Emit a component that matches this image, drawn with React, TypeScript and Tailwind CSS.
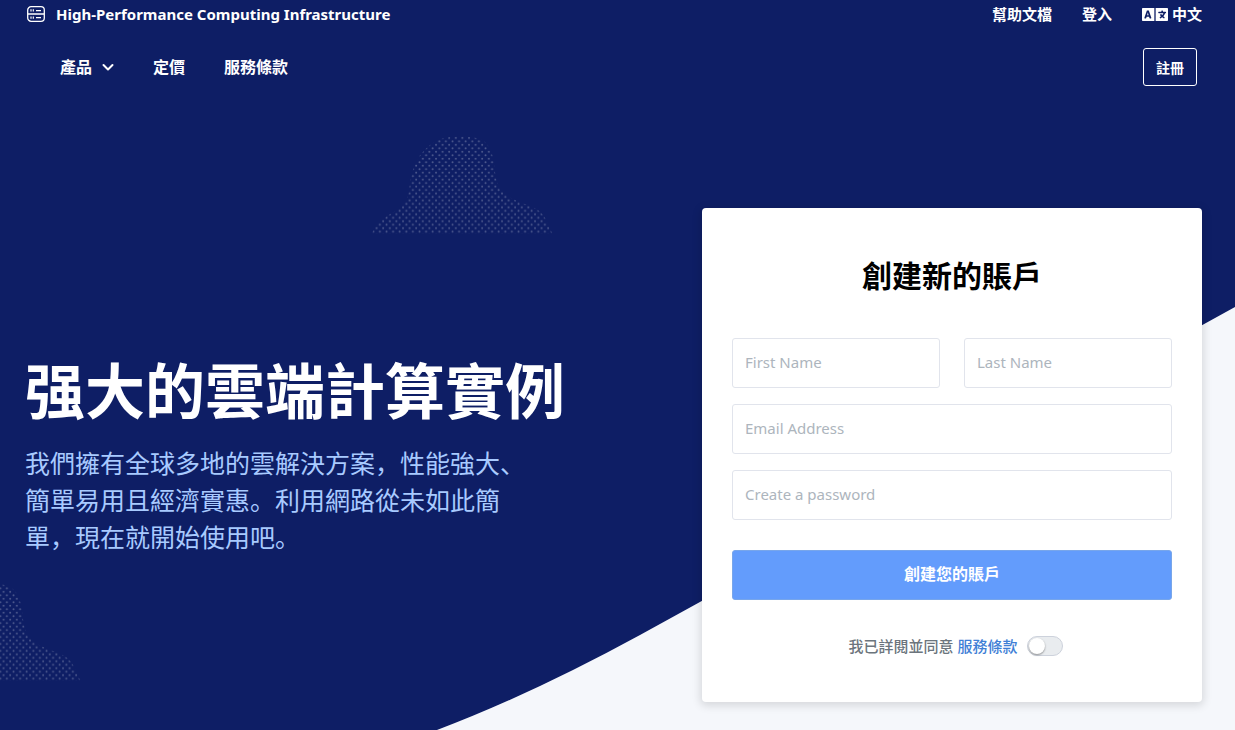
import type { InputHTMLAttributes } from "react";
import { FaLanguage } from "react-icons/fa";

function ServerIcon() {
  return (
    <svg viewBox="0 0 18 16" className="h-4 w-[18px] shrink-0" fill="none" stroke="currentColor" aria-hidden="true">
      <rect x="0.7" y="0.7" width="16.6" height="14.6" rx="3.4" strokeWidth="1.3" />
      <path d="M1 8h16" strokeWidth="1.5" />
      <path d="M4 3.2v2.4M6.3 3.2v2.4M4 10.4v2.4M6.3 10.4v2.4M9 4.6h5M9 11.6h5" strokeWidth="1.2" />
    </svg>
  );
}

function Chevron() {
  return (
    <svg viewBox="0 0 12 8" className="h-2 w-3" fill="none" stroke="currentColor" strokeWidth="2" aria-hidden="true">
      <path d="M1.5 2 6 6.500l4.500-4.500" strokeLinecap="round" strokeLinejoin="round" />
    </svg>
  );
}

const HILL =
  "M372 234C377 215 400 214 407 199C411 188 409 168 422 153C434 138 447 136 462 136.500C476 137 486 138 491 151C496 164 493 182 503 192C513 202 525 202 538 210C547 216 547 226 553 234Z";

function Backdrop() {
  return (
    <svg
      viewBox="0 0 1235 730"
      preserveAspectRatio="xMaxYMax slice"
      className="absolute inset-0 h-full w-full"
      aria-hidden="true"
    >
      <defs>
        <pattern id="dots" x="371.800" y="136.200" width="6.600" height="6.940" patternUnits="userSpaceOnUse">
          <circle cx="1.500" cy="5.270" r="0.950" fill="#fff" />
          <circle cx="4.800" cy="1.800" r="0.950" fill="#fff" />
        </pattern>
      </defs>
      <path d="M1235 307 640 635Q532 694 437 730H1235Z" fill="#f5f7fb" />
      <path d={HILL} fill="url(#dots)" opacity="0.27" />
      <path d={HILL} fill="url(#dots)" opacity="0.27" transform="translate(-472 447)" />
    </svg>
  );
}

function Field({ label, ...rest }: { label: string } & InputHTMLAttributes<HTMLInputElement>) {
  return (
    <input
      aria-label={label}
      placeholder={label}
      className="h-[50px] w-full min-w-0 rounded-[3px] border border-[#e1e4ec] bg-white px-3 pb-0.5 text-[15px] text-gray-800 placeholder:text-[#adb5bd]"
      {...rest}
    />
  );
}

export default function App() {
  return (
    <div
      lang="zh-Hans"
      className="relative min-h-screen bg-[#0e1e65] pb-7 pl-[25px] pr-[33px] font-['Noto_Sans','Noto_Sans_CJK_SC',sans-serif] text-white"
    >
      <Backdrop />
      <div className="relative">
        <header className="font-bold">
          <div className="flex h-7 items-center justify-between text-[15px] leading-5">
            <a href="#" className="flex items-center gap-[11px] pl-0.5">
              <ServerIcon />
              High-Performance Computing Infrastructure
            </a>
            <div className="flex items-center gap-[30px]">
              <a href="#docs">幫助文檔</a>
              <a href="#login">登入</a>
              <button type="button" className="flex items-center gap-1">
                <FaLanguage className="h-[21px] w-[26px]" />
                中文
              </button>
            </div>
          </div>
          <div className="mt-5 flex h-[38px] items-center justify-between pl-[35px] pr-[5px]">
            <nav className="flex items-center gap-[39px] text-base">
              <button type="button" className="flex items-center gap-2.5">
                產品
                <Chevron />
              </button>
              <a href="#pricing">定價</a>
              <a href="#terms">服務條款</a>
            </nav>
            <a
              href="#register"
              className="flex h-full items-center rounded-[3px] border border-white px-3 text-[14px]"
            >
              註冊
            </a>
          </div>
        </header>

        <main className="mt-[122px] flex items-center justify-between gap-8">
          <section>
            <h1 className="text-[60px] font-bold leading-[72px]">强大的雲端計算實例</h1>
            <p className="mt-[18px] max-w-[510px] text-[25px] leading-[37px] text-[#a8caff]">
              我們擁有全球多地的雲解決方案，性能強大、簡單易用且經濟實惠。利用網路從未如此簡單，現在就開始使用吧。
            </p>
          </section>

          <form className="w-full max-w-[500px] rounded bg-white px-[30px] pb-[46px] pt-12 shadow-[0_2px_8px_2px_rgba(0,0,0,0.12)]">
            <h2 className="text-center text-[30px] font-bold leading-10 text-black">創建新的賬戶</h2>
            <div className="mt-[42px] grid gap-4">
              <div className="grid grid-cols-2 gap-6">
                <Field label="First Name" />
                <Field label="Last Name" />
              </div>
              <Field label="Email Address" type="email" />
              <Field label="Create a password" type="password" />
            </div>
            <button
              type="submit"
              className="mt-[30px] h-[50px] w-full rounded-[3px] border border-[#78a6ea] bg-[#639cfc] pb-0.5 text-base font-bold"
            >
              創建您的賬戶
            </button>
            <div className="mt-9 flex h-5 items-center justify-center gap-2.5 pl-2 text-[15px] font-medium">
              <label htmlFor="agree" className="text-[#6c757d]">
                我已詳閱並同意{" "}
                <a href="#terms" className="text-[#3f7fd6]">
                  服務條款
                </a>
              </label>
              <input
                id="agree"
                type="checkbox"
                className="h-5 w-9 appearance-none rounded-full border border-[#cdd2dc] bg-[#e9ecef] p-px before:block before:size-4 before:rounded-full before:bg-white before:shadow-[0_1px_2px_rgba(0,0,0,0.4)] before:content-[''] checked:bg-[#639cfc] checked:before:ml-4"
              />
            </div>
          </form>
        </main>
      </div>
    </div>
  );
}
